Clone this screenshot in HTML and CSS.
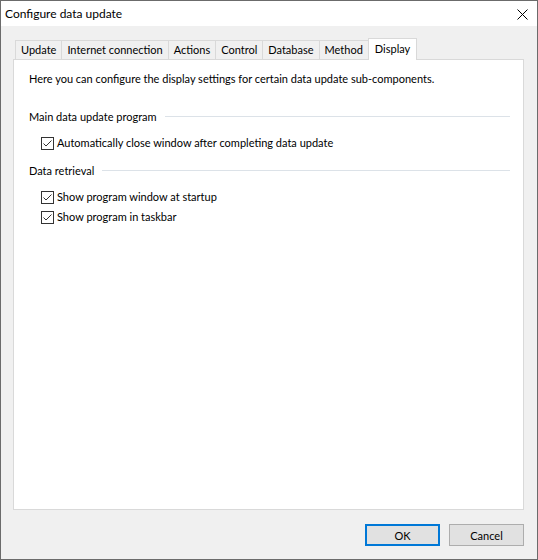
FILE: index.html
```html
<!DOCTYPE html>
<html lang="en">
<head>
    <meta charset="UTF-8">
    <title>Configure data update</title>
    <link rel="stylesheet" href="styles.css">
</head>
<body>
    <div class="window">
        <div class="title-bar">
            <span class="title">Configure data update</span>
            <svg class="close" width="11" height="11" viewBox="0 0 11 11">
                <path d="M0.5 0.5 L10.5 10.5 M10.5 0.5 L0.5 10.5" stroke="#000" stroke-width="1" fill="none"/>
            </svg>
        </div>

        <div class="dialog">
            <div class="tabs">
                <div class="tab">Update</div>
                <div class="tab">Internet connection</div>
                <div class="tab">Actions</div>
                <div class="tab">Control</div>
                <div class="tab">Database</div>
                <div class="tab">Method</div>
                <div class="tab active">Display</div>
            </div>

            <div class="panel">
                <p class="intro">Here you can configure the display settings for certain data update sub-components.</p>

                <div class="group first">
                    <div class="group-title"><span>Main data update program</span><i class="rule"></i></div>
                    <label class="check">
                        <svg class="box" width="13" height="13" viewBox="0 0 13 13">
                            <rect x="0.5" y="0.5" width="12" height="12" fill="#fff" stroke="#333"/>
                            <path d="M2.5 6.5 L5 9 L10.5 3.5" stroke="#333" stroke-width="1" fill="none"/>
                        </svg>
                        Automatically close window after completing data update
                    </label>
                </div>

                <div class="group">
                    <div class="group-title"><span>Data retrieval</span><i class="rule"></i></div>
                    <label class="check">
                        <svg class="box" width="13" height="13" viewBox="0 0 13 13">
                            <rect x="0.5" y="0.5" width="12" height="12" fill="#fff" stroke="#333"/>
                            <path d="M2.5 6.5 L5 9 L10.5 3.5" stroke="#333" stroke-width="1" fill="none"/>
                        </svg>
                        Show program window at startup
                    </label>
                    <label class="check">
                        <svg class="box" width="13" height="13" viewBox="0 0 13 13">
                            <rect x="0.5" y="0.5" width="12" height="12" fill="#fff" stroke="#333"/>
                            <path d="M2.5 6.5 L5 9 L10.5 3.5" stroke="#333" stroke-width="1" fill="none"/>
                        </svg>
                        Show program in taskbar
                    </label>
                </div>
            </div>

            <div class="buttons">
                <button class="btn default">OK</button>
                <button class="btn">Cancel</button>
            </div>
        </div>
    </div>
</body>
</html>
```

FILE: styles.css
```css
body { margin: 0; font-family: Lato, 'Liberation Sans', sans-serif; font-size: 11px; color: #000; background: #fff; }
.window { width: 538px; height: 560px; box-sizing: border-box; border: 1px solid #6b6b6b; display: flex; flex-direction: column; background: #f0f0f0; }
.title-bar { height: 25px; background: #fff; display: flex; align-items: center; justify-content: space-between; padding: 0 9px 0 4px; }
.title { font-size: 12px; line-height: 16px; }
.close { display: block; margin-top: 1px; }
.dialog { flex: 1; display: flex; flex-direction: column; padding: 12px 13px 13px 12px; }
.tabs { display: flex; padding-left: 2px; height: 21px; position: relative; z-index: 1; }
.tab { margin-top: 2px; height: 19px; box-sizing: border-box; padding: 0 5px; line-height: 18px; border: 1px solid #d9d9d9; border-bottom: none; border-right: none; background: #f0f0f0; }
.tab.active { margin-top: 0; height: 22px; padding: 0 6px; line-height: 19px; background: #fff; border: 1px solid #d9d9d9; border-bottom: none; }
.panel { flex: 1; background: #fff; border: 1px solid #d9d9d9; padding: 11px 13px 0 15px; }
.intro { margin: 0; line-height: 16px; }
.group { margin-top: 12px; }
.group.first { margin-top: 22px; }
.group-title { display: flex; align-items: center; line-height: 16px; margin-bottom: 10px; }
.rule { flex: 1; height: 1px; background: #dce2e8; margin-left: 8px; margin-top: -1px; }
.check { display: flex; align-items: center; gap: 3px; padding-left: 12px; line-height: 16px; margin-bottom: 4px; }
.box { display: block; flex: none; }
.buttons { display: flex; justify-content: flex-end; gap: 9px; padding-top: 14px; }
.btn { width: 75px; height: 22px; box-sizing: border-box; font-family: inherit; font-size: 11px; background: #e1e1e1; border: 1px solid #adadad; padding: 0; color: #000; }
.btn.default { border: 2px solid #0078d7; }
```
